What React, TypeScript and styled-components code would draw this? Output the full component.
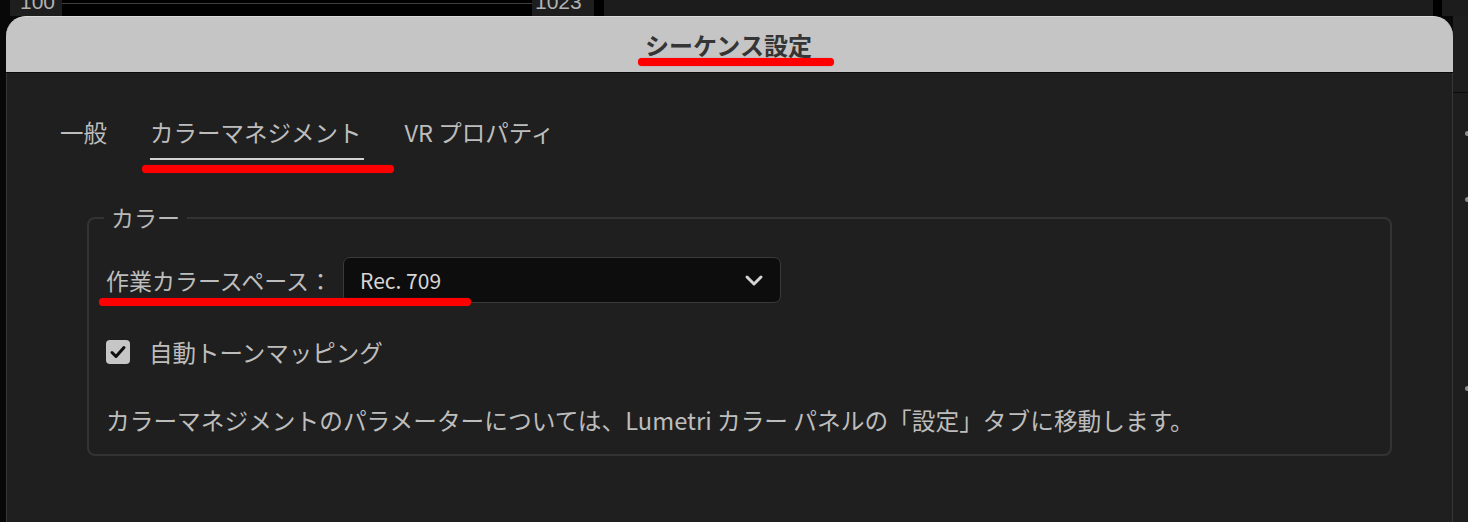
import React from "react";
import styled, { createGlobalStyle, css } from "styled-components";

const GlobalStyle = createGlobalStyle`
  html, body {
    margin: 0;
    padding: 0;
    background: #080808;
  }
  body {
    font-family: "Noto Sans CJK JP", "Noto Sans", sans-serif;
  }
  * {
    box-sizing: border-box;
  }
`;

// red annotation strokes drawn over the screenshot
const redMark = css`
  content: "";
  position: absolute;
  height: 8px;
  border-radius: 4px;
  background: #ff0000;
  box-shadow: 0 0 1px rgba(255, 0, 0, 0.7);
  z-index: 2;
`;

const Page = styled.div`
  width: 1468px;
  height: 522px;
  overflow: hidden;
  display: flex;
  flex-direction: column;
  background: #080808;
`;

const TopStrip = styled.div`
  height: 16px;
  flex: none;
  display: flex;
  overflow: hidden;
  padding-left: 10px;
`;

const ValueBox = styled.div<{ $width: number; $pad: number }>`
  width: ${(p) => p.$width}px;
  height: 16px;
  flex: none;
  background: #1e1e1e;
  color: #b2b2b2;
  font-family: "Liberation Sans", Arial, sans-serif;
  font-size: 21px;
  line-height: 21px;
  padding-left: ${(p) => p.$pad}px;
  overflow: hidden;
`;

const Digits = styled.span`
  display: block;
  margin-top: -9px;
`;

const Track = styled.div`
  width: 470px;
  flex: none;
  background: linear-gradient(#000 0 3px, #3e3e3e 3px 4px, #000 4px);
`;

const StripGap = styled.div`
  width: 10px;
  flex: none;
  background: #000;
`;

const StripRest = styled.div`
  flex: 1;
  background: linear-gradient(
    to right,
    #1c1c1c 0 829px,
    #000 829px 838px,
    #1c1c1c 838px
  );
`;

const MainRow = styled.div`
  flex: 1;
  display: flex;
  min-height: 0;
`;

const Gutter = styled.div`
  width: 6px;
  flex: none;
  background: #080808;
`;

const Dialog = styled.div`
  width: 1447px;
  flex: none;
  display: flex;
  flex-direction: column;
`;

const TitleBar = styled.div`
  height: 57px;
  flex: none;
  background: #c5c5c5;
  border-radius: 20px 20px 0 0;
  border-top: 1px solid #dadada;
  border-bottom: 1px solid #0b0b0b;
  display: flex;
  align-items: center;
  justify-content: center;
`;

const Title = styled.h1`
  position: relative;
  margin: 0 0 0 -2px;
  font-size: 24px;
  line-height: 24px;
  font-weight: 700;
  color: #353535;

  &::after {
    ${redMark}
    left: -7px;
    right: -22px;
    bottom: -9px;
  }
`;

const Body = styled.div`
  flex: 1;
  background: #1f1f1f;
  border-left: 1px solid #363636;
  border-right: 1px solid #363636;
  padding: 48px 60px 0 53px;
`;

const TabBar = styled.div`
  display: flex;
  gap: 41px;
`;

const Tab = styled.div<{ $active?: boolean }>`
  position: relative;
  font-size: 23.5px;
  line-height: 23px;
  color: #bdbdbd;
  padding: 0 2px 14px 0;
  border-bottom: 2px solid ${(p) => (p.$active ? "#d2d2d2" : "transparent")};

  ${(p) =>
    p.$active &&
    css`
      &::after {
        ${redMark}
        left: -8px;
        right: -30px;
        bottom: -15px;
      }
    `}
`;

const Group = styled.fieldset`
  margin: 46px 0 0 27px;
  border: 2px solid #333333;
  border-radius: 8px;
  padding: 28px 16px 22px 17px;
  min-width: 0;
`;

const Legend = styled.legend`
  margin-left: -2px;
  padding: 0 7px;
  font-size: 23px;
  line-height: 23px;
  color: #b8b8b8;
`;

const FieldRow = styled.div`
  position: relative;
  display: flex;
  align-items: center;
  gap: 11px;

  &::after {
    ${redMark}
    left: -7px;
    top: 41px;
    width: 372px;
  }
`;

const Label = styled.span<{ $size?: number }>`
  font-size: ${(p) => p.$size ?? 23}px;
  line-height: 23px;
  color: #bdbdbd;
`;

const Select = styled.div`
  width: 438px;
  height: 46px;
  background: #0d0d0d;
  border: 1.5px solid #3a3a3a;
  border-radius: 7px;
  display: flex;
  align-items: center;
  justify-content: space-between;
  padding: 0 16px 0 16px;
  font-size: 21px;
  color: #d6d6d6;
`;

const CheckRow = styled.label`
  margin-top: 37px;
  display: flex;
  align-items: center;
  gap: 19px;
`;

const CheckBox = styled.span`
  width: 24px;
  height: 24px;
  flex: none;
  background: #c6c6c6;
  border-radius: 4px;
  display: flex;
  align-items: center;
  justify-content: center;
`;

const Info = styled.p`
  margin: 44px 0 0;
  font-size: 23.7px;
  line-height: 24px;
  color: #bdbdbd;
  white-space: nowrap;
`;

const SidePanel = styled.div`
  flex: 1;
  background: #1e1e1e;
  display: flex;
  flex-direction: column;
  padding-left: 12px;
`;

const SideHeader = styled.div`
  height: 77px;
  margin-left: -12px;
  border-bottom: 1px solid #0c0c0c;
`;

const Dot = styled.span<{ $gap: number }>`
  width: 5px;
  height: 5px;
  border-radius: 50%;
  background: #8c8c8c;
  margin-top: ${(p) => p.$gap}px;
`;

function Chevron() {
  return (
    <svg width="20" height="13" viewBox="0 0 20 13" fill="none">
      <path
        d="M3 3 L10 10 L17 3"
        stroke="#d4d4d4"
        strokeWidth="3"
        strokeLinecap="round"
        strokeLinejoin="round"
      />
    </svg>
  );
}

function Check() {
  return (
    <svg width="18" height="16" viewBox="0 0 18 16" fill="none">
      <path
        d="M3 8.5 L7 12.5 L15 3.5"
        stroke="#0e0e0e"
        strokeWidth="3"
        strokeLinecap="round"
        strokeLinejoin="round"
      />
    </svg>
  );
}

export default function App() {
  return (
    <Page>
      <GlobalStyle />
      <TopStrip>
        <ValueBox $width={52} $pad={10}>
          <Digits>100</Digits>
        </ValueBox>
        <Track />
        <ValueBox $width={62} $pad={3}>
          <Digits>1023</Digits>
        </ValueBox>
        <StripGap />
        <StripRest />
      </TopStrip>

      <MainRow>
        <Gutter />
        <Dialog>
          <TitleBar>
            <Title>シーケンス設定</Title>
          </TitleBar>
          <Body>
            <TabBar>
              <Tab>一般</Tab>
              <Tab $active>カラーマネジメント</Tab>
              <Tab>VR プロパティ</Tab>
            </TabBar>

            <Group>
              <Legend>カラー</Legend>
              <FieldRow>
                <Label>作業カラースペース：</Label>
                <Select>
                  <span>Rec. 709</span>
                  <Chevron />
                </Select>
              </FieldRow>
              <CheckRow>
                <CheckBox>
                  <Check />
                </CheckBox>
                <Label $size={23.5}>自動トーンマッピング</Label>
              </CheckRow>
              <Info>
                カラーマネジメントのパラメーターについては、Lumetri カラー
                パネルの「設定」タブに移動します。
              </Info>
            </Group>
          </Body>
        </Dialog>
        <SidePanel>
          <SideHeader />
          <Dot $gap={38} />
          <Dot $gap={61} />
          <Dot $gap={184} />
        </SidePanel>
      </MainRow>
    </Page>
  );
}
